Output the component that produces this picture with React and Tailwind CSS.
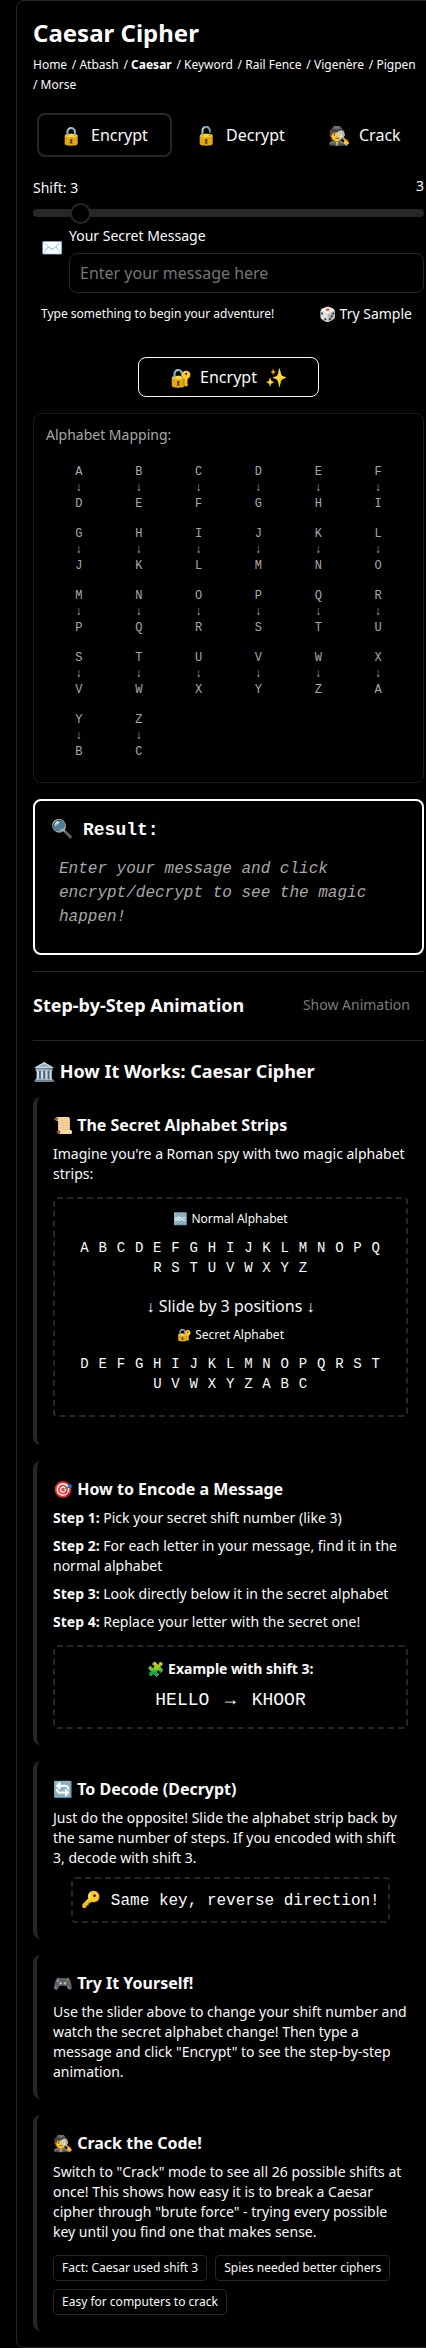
import React from "react";

const ALPHABET = "ABCDEFGHIJKLMNOPQRSTUVWXYZ".split("");
const SHIFT = 3;
const SHIFTED = ALPHABET.map((_, i) => ALPHABET[(i + SHIFT) % 26]);
const PAGES = ["Home", "Atbash", "Caesar", "Keyword", "Rail Fence", "Vigenère", "Pigpen", "Morse"];
const mono = "font-['Liberation_Mono',monospace]";

function Section({ title, className = "", children }) {
  return (
    <section className={"rounded-lg border-l-4 border-[#27272a] py-4 pr-4 pl-4 " + className}>
      <h3 className="mb-[7px] h-6 text-base leading-6 font-bold whitespace-nowrap">{title}</h3>
      {children}
    </section>
  );
}

function Strip({ label, letters }) {
  return (
    <div>
      <div className="h-4 text-xs leading-4">{label}</div>
      <div className={"mt-[3px] px-2 pt-2 pb-[9px] text-sm leading-5 tracking-wider " + mono}>{letters.join(" ")}</div>
    </div>
  );
}

function Chip({ children }) {
  return (
    <span className="h-[26px] rounded border border-[#27272a] px-2 py-1 text-xs leading-4 whitespace-nowrap">
      {children}
    </span>
  );
}

export default function App() {
  return (
    <div className="h-[2348px] w-full overflow-hidden bg-black pl-4 font-['Noto_Sans',sans-serif] text-[#fafafa]">
      <main className="h-[2348px] w-[425px] rounded-lg border border-[#27272a] p-4">
        <h1 className="h-8 text-2xl leading-8 font-bold text-white">Caesar Cipher</h1>
        <nav className="mt-1.5 h-10 text-xs leading-5">
          {PAGES.map((p, i) => (
            <React.Fragment key={p}>
              {i > 0 && " /\u00a0"}
              <a className={p === "Caesar" ? "mr-[1.6px] font-bold" : "mr-[1.6px]"}>{p}</a>
            </React.Fragment>
          ))}
        </nav>

        <div className="mt-[18px] ml-1 flex h-11 items-center text-base leading-6">
          <button className="flex h-11 w-[135px] items-center gap-[9px] rounded-lg border-2 border-[#27272a] pl-[21px]">
            <span className="w-[22px] text-lg">🔒</span>
            <span>Encrypt</span>
          </button>
          <button className="flex w-[133px] items-center gap-[9px] pl-[23px]">
            <span className="w-[22px] text-lg">🔓</span>
            <span>Decrypt</span>
          </button>
          <button className="flex items-center gap-[9px] pl-[23px]">
            <span className="w-[22px] text-lg">🕵️</span>
            <span>Crack</span>
          </button>
        </div>

        <div className="mt-5 flex h-6 justify-between text-sm leading-5">
          <label className="pt-px">Shift: 3</label>
          <span className="-mt-px">3</span>
        </div>
        <div className="mt-px flex h-[22px] items-center">
          <div className="flex h-2 w-full items-center rounded-full bg-[#27272a] pl-[37px]">
            <div className="size-[21px] shrink-0 rounded-full border-2 border-[#27272a] bg-black" />
          </div>
        </div>

        <div className="mt-0.5 flex h-[68px] pl-2">
          <span className="mt-[7px] w-7 text-lg leading-7">✉️</span>
          <div className="flex-1">
            <label className="block h-[27px] text-sm leading-5">Your Secret Message</label>
            <div className="flex h-10 items-center rounded-lg border border-[#27272a] pl-2.5 text-base leading-6 text-[#757575]">
              Enter your message here
            </div>
          </div>
        </div>

        <div className="mt-2.5 flex h-5 items-center justify-between pr-3 pl-2">
          <span className="text-xs">Type something to begin your adventure!</span>
          <span className="text-sm leading-5">🎲 Try Sample</span>
        </div>

        <button className="mx-auto mt-[33px] flex h-10 w-[181px] items-center justify-center gap-2 rounded-lg border border-[#fafafa] text-base">
          <span className="text-lg">🔐</span>
          <span>Encrypt</span>
          <span className="text-lg">✨</span>
        </button>

        <div className="mt-4 h-[370px] rounded-lg border border-[#1b1b1d] px-3 pt-[11px] text-[#a8a8a8]">
          <div className="text-sm leading-5">Alphabet Mapping:</div>
          <div className={"mx-[3px] mt-[19px] grid grid-cols-6 gap-y-3.5 text-center text-xs leading-4 " + mono}>
            {ALPHABET.map((c, i) => (
              <div key={c}>
                <div>{c}</div>
                <div>↓</div>
                <div>{SHIFTED[i]}</div>
              </div>
            ))}
          </div>
        </div>

        <div className={"mt-4 h-[156px] rounded-lg border-2 border-white px-4 pt-[15px] " + mono}>
          <div className="flex h-7 items-center gap-2.5">
            <span className="w-[22px] text-lg">🔍</span>
            <span className="text-lg font-bold text-white">Result:</span>
          </div>
          <p className="mt-[13px] pl-2 text-base leading-6 text-[#a8a8a8] italic">
            Enter your message and click encrypt/decrypt to see the magic happen!
          </p>
        </div>

        <div className="mt-4 flex h-[70px] items-center justify-between border-y border-[#27272a] pb-0.5">
          <h2 className="text-lg leading-7 font-bold">Step-by-Step Animation</h2>
          <span className="pr-3.5 text-sm text-[#7c7c7c]">Show Animation</span>
        </div>

        <h2 className="mt-4 mb-3 h-7 text-lg leading-7 font-bold whitespace-nowrap">🏛️ How It Works: Caesar Cipher</h2>

        <div className="flex flex-col gap-4">
          <Section title="📜 The Secret Alphabet Strips" className="h-[348px]">
            <p className="text-sm leading-5">Imagine you're a Roman spy with two magic alphabet strips:</p>
            <div className="mt-[13px] h-[220px] rounded border-2 border-dashed border-[#27272a] p-3 text-center">
              <Strip label="🔤 Normal Alphabet" letters={ALPHABET} />
              <div className="mt-[7px] mb-[9px] h-6 text-base leading-6">↓ Slide by 3 positions ↓</div>
              <Strip label="🔐 Secret Alphabet" letters={SHIFTED} />
            </div>
          </Section>

          <Section title="🎯 How to Encode a Message" className="h-[284px]">
            <div className="space-y-2 text-sm leading-5">
              <p><b>Step 1:</b> Pick your secret shift number (like 3)</p>
              <p><b>Step 2:</b> For each letter in your message, find it in the normal alphabet</p>
              <p><b>Step 3:</b> Look directly below it in the secret alphabet</p>
              <p><b>Step 4:</b> Replace your letter with the secret one!</p>
            </div>
            <div className="mt-[13px] h-[84px] rounded border-2 border-dashed border-[#27272a] p-3 text-center">
              <div className="text-sm leading-5 font-bold">🧩 Example with shift 3:</div>
              <div className={"mt-[7px] text-lg leading-7 " + mono}>
                HELLO <span className="mx-[5px]">→</span> KHOOR
              </div>
            </div>
          </Section>

          <Section title="🔄 To Decode (Decrypt)" className="h-[178px]">
            <p className="text-sm leading-5">
              Just do the opposite! Slide the alphabet strip back by the same number of steps. If you encoded with
              shift 3, decode with shift 3.
            </p>
            <div className={"mx-auto mt-[9px] flex h-[46px] w-[319px] items-center justify-center rounded border-2 border-dashed border-[#27272a] pt-0.5 text-base leading-6 whitespace-nowrap " + mono}>
              🔑 Same key, reverse direction!
            </div>
          </Section>

          <Section title="🎮 Try It Yourself!" className="h-36">
            <p className="text-sm leading-5">
              Use the slider above to change your shift number and watch the secret alphabet change! Then type a
              message and click "Encrypt" to see the step-by-step animation.
            </p>
          </Section>

          <Section title="🕵️ Crack the Code!" className="h-[216px]">
            <p className="text-sm leading-5">
              Switch to "Crack" mode to see all 26 possible shifts at once! This shows how easy it is to break a
              Caesar cipher through "brute force" - trying every possible key until you find one that makes sense.
            </p>
            <div className="mt-[13px] flex flex-wrap gap-2">
              <Chip>Fact: Caesar used shift 3</Chip>
              <Chip>Spies needed better ciphers</Chip>
              <Chip>Easy for computers to crack</Chip>
            </div>
          </Section>
        </div>
      </main>
    </div>
  );
}
